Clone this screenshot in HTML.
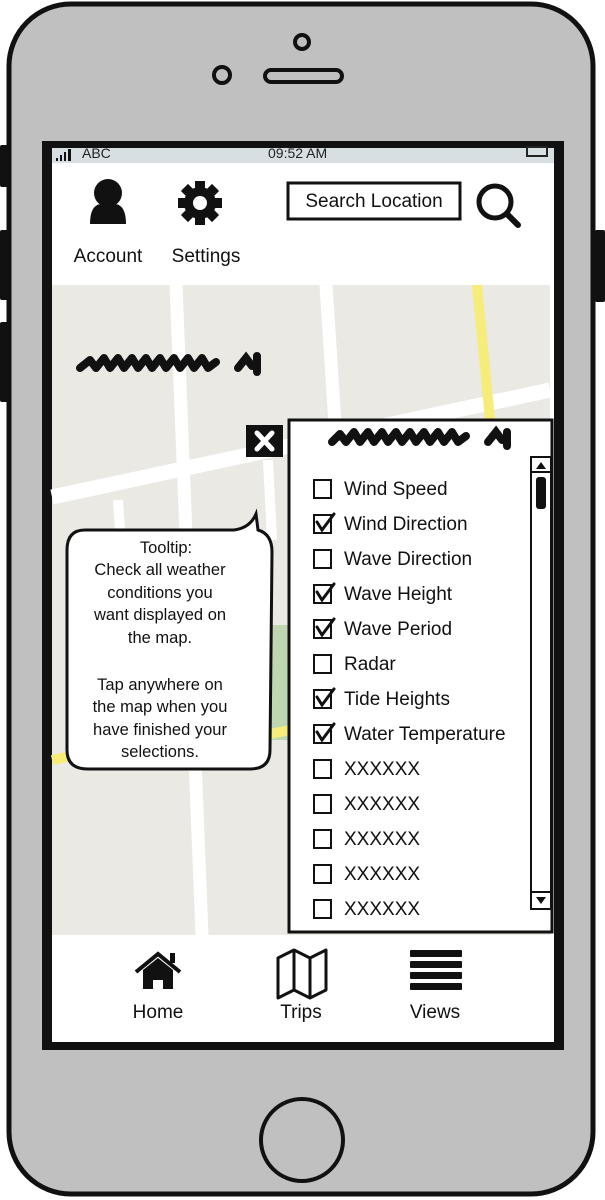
<!DOCTYPE html>
<html><head><meta charset="utf-8"><style>
html,body{margin:0;padding:0;background:#fff;width:605px;height:1200px;overflow:hidden}
text{font-family:"Liberation Sans",sans-serif}
</style></head><body>
<svg width="605" height="1200" viewBox="0 0 605 1200" xmlns="http://www.w3.org/2000/svg">
<rect x="0" y="145" width="10" height="42" rx="2" fill="#111"/>
<rect x="0" y="230" width="10" height="70" rx="2" fill="#111"/>
<rect x="0" y="322" width="10" height="80" rx="2" fill="#111"/>
<rect x="595" y="230" width="10" height="72" rx="2" fill="#111"/>
<rect x="9" y="4" width="584" height="1190" rx="62" fill="#c0c0c0" stroke="#111" stroke-width="5"/>
<circle cx="302" cy="42" r="7" fill="none" stroke="#111" stroke-width="4"/>
<circle cx="222" cy="75" r="8" fill="none" stroke="#111" stroke-width="4"/>
<rect x="265" y="70" width="77" height="12" rx="6" fill="none" stroke="#111" stroke-width="4"/>
<circle cx="302" cy="1140" r="41" fill="none" stroke="#111" stroke-width="4"/>
<rect x="42" y="141" width="522" height="909" fill="#111"/>
<rect x="52" y="148" width="502" height="894" fill="#fff"/>
<rect x="52" y="148" width="502" height="15" fill="#d7dfe3"/>
<g fill="#111"><rect x="56" y="158" width="2" height="3"/><rect x="60" y="155" width="2" height="6"/><rect x="64" y="152" width="2" height="9"/><rect x="68" y="149" width="3" height="12"/></g>
<text x="82" y="158" font-size="14" fill="#222">ABC</text>
<text x="268" y="158" font-size="14" fill="#222">09:52 AM</text>
<rect x="527" y="147" width="20" height="9" fill="none" stroke="#222" stroke-width="2"/>
<circle cx="108" cy="193" r="14" fill="#111"/>
<path d="M90 224 Q90 206 100 204 L116 204 Q126 206 126 224 Z" fill="#111"/>
<g transform="translate(200,203)" fill="#111">
<circle r="16"/>
<g><rect x="-5" y="-22" width="10" height="44"/><rect x="-22" y="-5" width="44" height="10"/>
<rect x="-5" y="-22" width="10" height="44" transform="rotate(45)"/><rect x="-5" y="-22" width="10" height="44" transform="rotate(-45)"/></g>
<circle r="7" fill="#fff"/></g>
<text x="108" y="262" font-size="19" text-anchor="middle" fill="#111">Account</text>
<text x="206" y="262" font-size="19" text-anchor="middle" fill="#111">Settings</text>
<rect x="288" y="183" width="172" height="36" fill="#fff" stroke="#111" stroke-width="3"/>
<text x="374" y="207" font-size="19" text-anchor="middle" fill="#111">Search Location</text>
<circle cx="495" cy="202" r="16" fill="none" stroke="#111" stroke-width="5"/>
<line x1="507" y1="214" x2="518" y2="225" stroke="#111" stroke-width="6" stroke-linecap="round"/>
<rect x="52" y="285" width="498" height="650" fill="#ebe9e4"/>
<rect x="255" y="625" width="40" height="115" fill="#bfd7b0"/>
<g stroke="#fff" fill="none">
<line x1="176" y1="285" x2="202" y2="935" stroke-width="13"/>
<line x1="326" y1="285" x2="338" y2="470" stroke-width="13"/>
<line x1="52" y1="497" x2="550" y2="390" stroke-width="15"/>
<line x1="118" y1="500" x2="122" y2="560" stroke-width="10"/>
<line x1="268" y1="460" x2="272" y2="540" stroke-width="10"/>
</g>
<line x1="477" y1="285" x2="490" y2="420" stroke="#f6ec7a" stroke-width="10"/>
<line x1="52" y1="760" x2="90" y2="752" stroke="#f6ec7a" stroke-width="10"/>
<line x1="265" y1="735" x2="290" y2="730" stroke="#f6ec7a" stroke-width="10"/>
<path d="M80 368 L90 360 L96 368 L104 358 L110 368 L118 358 L124 368 L132 358 L138 368 L146 358 L152 368 L160 358 L166 368 L174 358 L180 368 L188 358 L194 368 L202 358 L208 368 L216 362" stroke="#111" stroke-width="8" fill="none" stroke-linecap="round" stroke-linejoin="round"/>
<path d="M238 368 L246 358 L252 366 M257 356 L257 372" stroke="#111" stroke-width="8" fill="none" stroke-linecap="round"/>
<rect x="246" y="425" width="37" height="32" fill="#111"/>
<path d="M257 433 L272 449 M272 433 L257 449" stroke="#fff" stroke-width="5" stroke-linecap="round"/>
<rect x="289" y="420" width="263" height="512" fill="#fff" stroke="#111" stroke-width="3"/>
<path d="M332 442 L340 434 L346 442 L354 432 L360 442 L368 432 L374 442 L382 432 L388 442 L396 432 L402 442 L410 432 L416 442 L424 432 L430 442 L438 432 L444 442 L452 432 L458 442 L466 436" stroke="#111" stroke-width="8" fill="none" stroke-linecap="round" stroke-linejoin="round"/>
<path d="M488 442 L496 432 L502 440 M507 432 L507 446" stroke="#111" stroke-width="8" fill="none" stroke-linecap="round"/>
<rect x="531" y="457" width="20" height="452" fill="#fff" stroke="#111" stroke-width="2"/>
<line x1="531" y1="472" x2="551" y2="472" stroke="#111" stroke-width="2"/>
<line x1="531" y1="892" x2="551" y2="892" stroke="#111" stroke-width="2"/>
<polygon points="536,469 546,469 541,462" fill="#111"/>
<polygon points="536,897 546,897 541,904" fill="#111"/>
<rect x="536" y="477" width="10" height="32" rx="3" fill="#111"/>
<g font-size="19" fill="#111">
<g fill="none" stroke="#111" stroke-width="2">
<rect x="314" y="480" width="17" height="18"/><rect x="314" y="515" width="17" height="18"/><rect x="314" y="550" width="17" height="18"/><rect x="314" y="585" width="17" height="18"/><rect x="314" y="620" width="17" height="18"/><rect x="314" y="655" width="17" height="18"/><rect x="314" y="690" width="17" height="18"/><rect x="314" y="725" width="17" height="18"/><rect x="314" y="760" width="17" height="18"/><rect x="314" y="795" width="17" height="18"/><rect x="314" y="830" width="17" height="18"/><rect x="314" y="865" width="17" height="18"/><rect x="314" y="900" width="17" height="18"/>
</g>
<g fill="none" stroke="#111" stroke-width="3" stroke-linecap="round">
<path d="M317 522 L322 530 L334 514"/><path d="M317 592 L322 600 L334 584"/><path d="M317 627 L322 635 L334 619"/><path d="M317 697 L322 705 L334 689"/><path d="M317 732 L322 740 L334 724"/>
</g>
<text x="344" y="495">Wind Speed</text>
<text x="344" y="530">Wind Direction</text>
<text x="344" y="565">Wave Direction</text>
<text x="344" y="600">Wave Height</text>
<text x="344" y="635">Wave Period</text>
<text x="344" y="670">Radar</text>
<text x="344" y="705">Tide Heights</text>
<text x="344" y="740">Water Temperature</text>
<text x="344" y="775">XXXXXX</text>
<text x="344" y="810">XXXXXX</text>
<text x="344" y="845">XXXXXX</text>
<text x="344" y="880">XXXXXX</text>
<text x="344" y="915">XXXXXX</text>
</g>
<path d="M85 530 L234 530 Q250 528 256 514 L258 530 Q272 534 272 552 L270 750 Q270 769 250 769 L88 769 Q67 769 67 750 L67 550 Q67 530 85 530 Z" fill="#fff" stroke="#111" stroke-width="3"/>
<g font-size="16.5" fill="#111" text-anchor="middle">
<text x="166" y="553">Tooltip:</text>
<text x="160" y="575">Check all weather</text>
<text x="160" y="598">conditions you</text>
<text x="160" y="620">want displayed on</text>
<text x="160" y="643">the map.</text>
<text x="160" y="690">Tap anywhere on</text>
<text x="160" y="712">the map when you</text>
<text x="160" y="735">have finished your</text>
<text x="160" y="757">selections.</text>
</g>
<path d="M136 972 L158 954 L180 972" fill="none" stroke="#111" stroke-width="4"/>
<rect x="170" y="953" width="5" height="10" fill="#111"/>
<path d="M143 970 L158 958 L173 970 L173 989 L163 989 L163 980 L153 980 L153 989 L143 989 Z" fill="#111"/>
<path d="M278 958 L294 950 L310 958 L326 950 L326 990 L310 998 L294 990 L278 998 Z M294 950 L294 990 M310 958 L310 998" fill="none" stroke="#111" stroke-width="3" stroke-linejoin="round"/>
<g fill="#111"><rect x="410" y="950" width="52" height="7" rx="1"/><rect x="410" y="961" width="52" height="7" rx="1"/><rect x="410" y="972" width="52" height="7" rx="1"/><rect x="410" y="983" width="52" height="7" rx="1"/></g>
<g font-size="19" fill="#111" text-anchor="middle">
<text x="158" y="1018">Home</text>
<text x="301" y="1018">Trips</text>
<text x="435" y="1018">Views</text>
</g>
</svg>
</body></html>
